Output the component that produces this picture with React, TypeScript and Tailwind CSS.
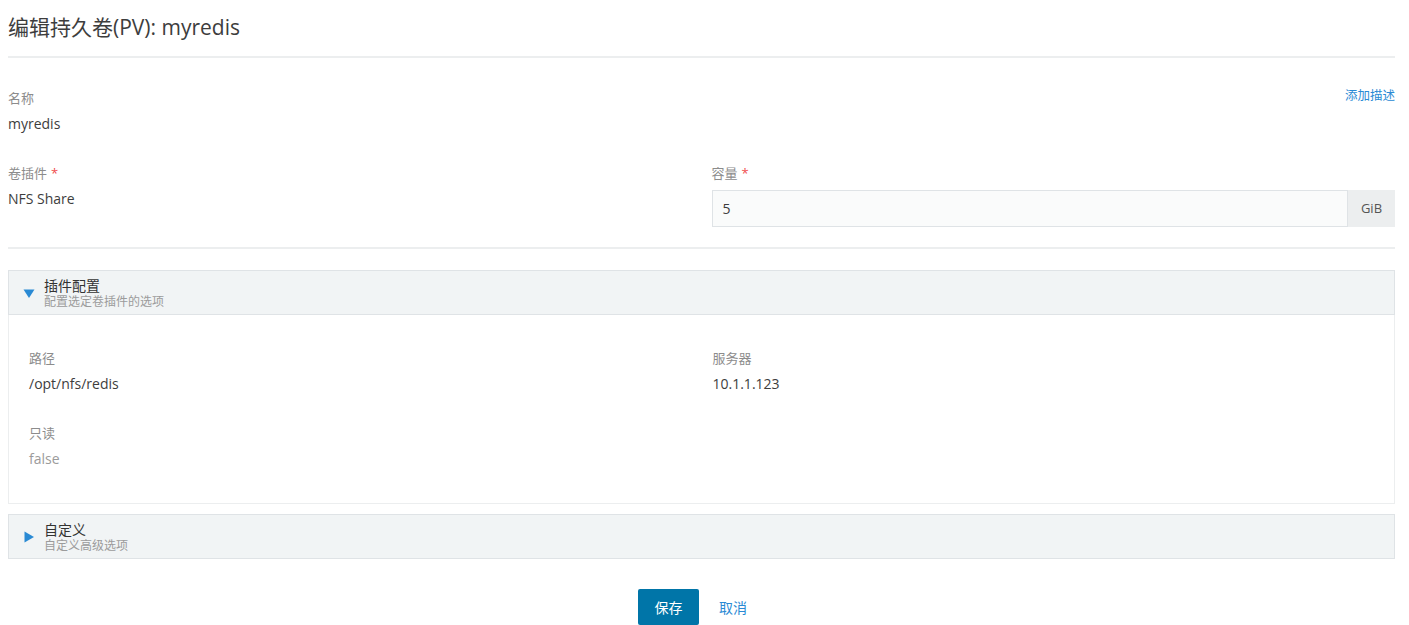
import React from 'react';

const FONT = "font-['Open_Sans','Noto_Sans_CJK_SC',sans-serif]";

function Field({label, value, required, muted}: {label: string; value: string; required?: boolean; muted?: boolean}) {
    return (
        <div>
            <div className="text-[13px] leading-[18px] text-[#8c8c8c]">
                {label}
                {required && <span className="ml-1 text-[#f04d4d]">*</span>}
            </div>
            <div className={`mt-[8px] text-[14px] leading-[18px] ${muted ? 'text-[#9b9b9b]' : 'text-[#3d3d3d]'}`}>
                {value}
            </div>
        </div>
    );
}

function AccordionHeader({title, subtitle, open}: {title: string; subtitle: string; open?: boolean}) {
    return (
        <div className="flex h-[45px] items-center border border-[#dfe3e6] bg-[#f1f4f5] pl-[14px]">
            <svg width="12" height="12" viewBox="0 0 12 12" className="shrink-0">
                {open ? (
                    <path d="M0.5 2.5 H11.5 L6 11 Z" fill="#2a8ad4"/>
                ) : (
                    <path d="M1.5 0.5 L11 6 L1.5 11.5 Z" fill="#2a8ad4"/>
                )}
            </svg>
            <div className="ml-[9px]">
                <div className="text-[14px] leading-[17px] text-[#333]">{title}</div>
                <div className="text-[12px] leading-[15px] text-[#9b9b9b]">{subtitle}</div>
            </div>
        </div>
    );
}

export default function App() {
    return (
        <div className={`${FONT} min-h-[625px] bg-white pl-[8px] pr-[14px]`}>
            <div className="flex h-[58px] items-center border-b-2 border-[#eceeef]">
                <h1 className="text-[21px] text-[#3d3d3d]">编辑持久卷(PV): myredis</h1>
            </div>

            <div className="flex justify-between pt-[31px]">
                <Field label="名称" value="myredis"/>
                <a className="-mt-[2px] text-[12.5px] leading-[18px] text-[#2a8ad4]">添加描述</a>
            </div>

            <div className="grid grid-cols-2 gap-[20px] pt-[31px] pb-[20px]">
                <Field label="卷插件" value="NFS Share" required/>
                <div>
                    <div className="text-[13px] leading-[18px] text-[#8c8c8c]">
                        容量<span className="ml-1 text-[#f04d4d]">*</span>
                    </div>
                    <div className="mt-[8px] flex h-[37px]">
                        <div className="flex flex-1 items-center border border-[#dfe3e6] bg-[#fafbfb] px-[10px] text-[14px] text-[#3d3d3d]">
                            5
                        </div>
                        <div className="flex w-[47px] items-center justify-center bg-[#eceeef] text-[13px] text-[#555]">
                            GiB
                        </div>
                    </div>
                </div>
            </div>

            <div className="border-t-2 border-[#eceeef] pt-[21px]">
                <AccordionHeader title="插件配置" subtitle="配置选定卷插件的选项" open/>
                <div className="h-[189px] border border-t-0 border-[#eceeef] px-[20px] pt-[34px]">
                    <div className="grid grid-cols-2">
                        <Field label="路径" value="/opt/nfs/redis"/>
                        <div className="pl-[11px]">
                            <Field label="服务器" value="10.1.1.123"/>
                        </div>
                    </div>
                    <div className="mt-[31px]">
                        <Field label="只读" value="false" muted/>
                    </div>
                </div>

                <div className="mt-[10px]">
                    <AccordionHeader title="自定义" subtitle="自定义高级选项"/>
                </div>

                <div className="flex justify-center gap-[20px] pt-[30px] pr-[18px]">
                    <button className="h-[36px] w-[61px] rounded-[2px] bg-[#0075a8] text-[14px] text-white">保存</button>
                    <button className="h-[36px] text-[14px] text-[#2a8ad4]">取消</button>
                </div>
            </div>
        </div>
    );
}
